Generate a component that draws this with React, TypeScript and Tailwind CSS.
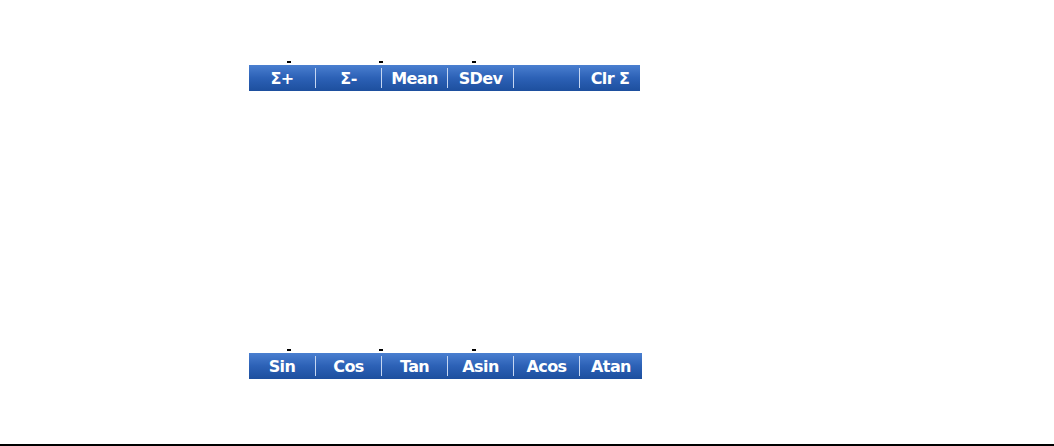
import React from "react";

const font = { fontFamily: '"DejaVu Sans", Verdana, sans-serif' };

function Bar({ labels, widths }: { labels: string[]; widths: number[] }) {
  return (
    <div className="relative ml-[249px] flex h-[26px] bg-gradient-to-b from-[#4a7fd0] via-[#2c61b6] to-[#1d4f9e]">
      {labels.map((l, i) => (
        <React.Fragment key={i}>
          {i > 0 && <div className="my-[3px] w-px bg-[#c5d6f2]" />}
          <div
            className="flex items-center justify-center pt-px text-[16px] font-bold leading-none tracking-[-0.6px] text-white"
            style={{ width: widths[i], ...font }}
          >
            {l}
          </div>
        </React.Fragment>
      ))}
      <div className="absolute left-[38px] top-[-4px] h-[2px] w-[4px] bg-black" />
      <div className="absolute left-[130px] top-[-4px] h-[2px] w-[4px] bg-black" />
      <div className="absolute left-[223px] top-[-4px] h-[2px] w-[4px] bg-black" />
    </div>
  );
}

export default function App() {
  return (
    <div className="flex h-[446px] w-[1054px] flex-col bg-white">
      <div className="mt-[65px] flex">
        <Bar labels={["Σ+", "Σ-", "Mean", "SDev", "", "Clr Σ"]} widths={[66, 65, 65, 65, 65, 60]} />
      </div>
      <div className="mt-[262px] flex">
        <Bar labels={["Sin", "Cos", "Tan", "Asin", "Acos", "Atan"]} widths={[66, 65, 65, 65, 65, 62]} />
      </div>
      <div className="mt-auto h-[2px] w-full bg-black" />
    </div>
  );
}
